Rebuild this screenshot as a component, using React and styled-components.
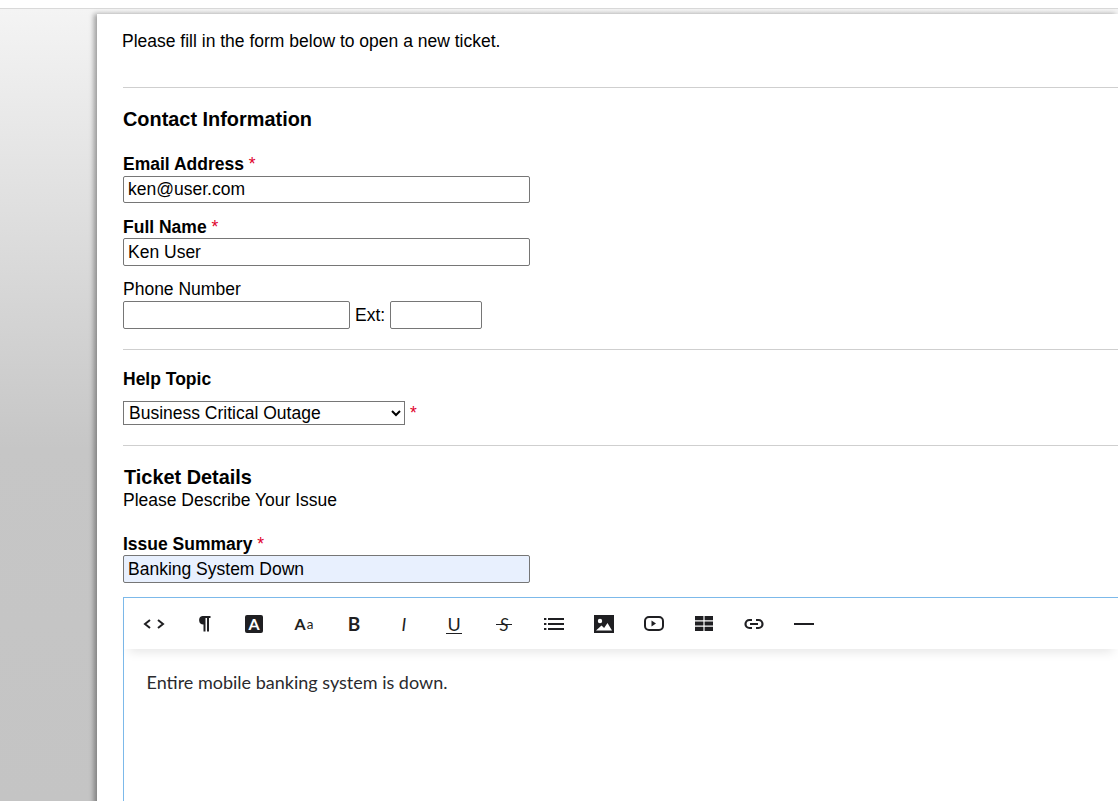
import React from "react";
import styled, { createGlobalStyle } from "styled-components";

const GlobalStyle = createGlobalStyle`
  html, body {
    margin: 0;
    padding: 0;
    height: 801px;
    overflow: hidden;
    background: #fff;
  }
`;

const Page = styled.div`
  height: 801px;
  overflow: hidden;
  padding-top: 8px;
  box-sizing: border-box;
  font-family: "Liberation Sans", Arial, sans-serif;
  font-size: 17.5px;
  color: #000;
`;

const Backdrop = styled.div`
  height: 793px;
  border-top: 1px solid #d9d9d9;
  padding: 5px 0 0 97px;
  box-sizing: border-box;
  background-image: linear-gradient(to bottom, #f4f4f4 0, #c6c6c6 440px, #c4c4c4 100%);
`;

const Main = styled.div`
  height: 800px;
  background: #fff;
  box-shadow: -3px 0 5px rgba(0, 0, 0, 0.35);
  padding: 17px 0 0 25px;
`;

const Intro = styled.p`
  margin: 0 0 36px;
  line-height: 20px;
`;

const Rule = styled.div`
  height: 1px;
  background: #cfcfcf;
  margin: ${(p) => p.$top || 0}px 0 0 1px;
`;

const Section = styled.section`
  padding-left: 1px;
`;

const Heading = styled.h2`
  margin: 20px 0 0 ${(p) => p.$left || 0}px;
  font-size: 19.9px;
  line-height: 23px;
  font-weight: bold;
`;

const Label = styled.div`
  line-height: 22px;
  font-weight: ${(p) => (p.$bold ? "bold" : "normal")};
  margin-top: ${(p) => p.$top || 0}px;
  margin-bottom: ${(p) => p.$bottom ?? 1}px;
`;

const Star = styled.span`
  color: #e0002b;
  font-weight: normal;
`;

const Field = styled.div`
  margin-top: ${(p) => p.$top}px;
`;

const Input = styled.input`
  display: block;
  box-sizing: border-box;
  width: ${(p) => p.$width}px;
  height: ${(p) => p.$height || 28}px;
  padding: 0 4px;
  margin: 0;
  border: 1px solid #767676;
  border-radius: 2px;
  background: ${(p) => p.$bg || "#fff"};
  font: inherit;
  color: #000;
  outline: none;
`;

const PhoneRow = styled.div`
  display: flex;
  align-items: center;
`;

const ExtLabel = styled.span`
  margin: 0 5px;
`;

const Select = styled.select`
  box-sizing: border-box;
  width: 282px;
  height: 24px;
  margin: 0;
  padding-left: 1px;
  border: 1px solid #767676;
  border-radius: 0;
  background: #fff;
  font: inherit;
  color: #000;
  outline: none;
`;

const TopicRow = styled.div`
  display: flex;
  align-items: center;
  gap: 5px;
  margin-top: 11px;
`;

const Editor = styled.div`
  margin-top: 14px;
  border-top: 1px solid #7cb9ea;
  border-left: 1px solid #7cb9ea;
  height: 300px;
`;

const Toolbar = styled.div`
  display: flex;
  height: 51px;
  padding-left: 5px;
  background: #fff;
  box-shadow: 0 8px 10px -5px rgba(0, 0, 0, 0.1);
`;

const ToolButton = styled.div`
  width: 50px;
  height: 51px;
  display: flex;
  align-items: center;
  justify-content: center;
  color: #1f1f22;
  font-family: "Lato", sans-serif;
  font-size: ${(p) => p.$size || 18}px;
  font-weight: ${(p) => p.$weight || 400};
  font-style: ${(p) => (p.$italic ? "italic" : "normal")};
`;

const SmallA = styled.span`
  font-size: 13.5px;
  font-weight: 400;
  margin-left: 1px;
`;

const Underlined = styled.span`
  position: relative;
  &::after {
    content: "";
    position: absolute;
    left: -1px;
    right: -1px;
    bottom: 1px;
    height: 1px;
    background: currentColor;
  }
`;

const Struck = styled.span`
  position: relative;
  font-style: italic;
  &::after {
    content: "";
    position: absolute;
    left: -3px;
    right: -3px;
    top: 11px;
    height: 1px;
    background: currentColor;
  }
`;

const Body = styled.div`
  padding: 23px 23px 23px 22.5px;
  font-size: 18px;
  line-height: 20px;
  color: #2a2a2e;
  font-family: "Lato", sans-serif;
`;

const Glyph = ({ w = 18, h = 18, children }) => (
  <svg width={w} height={h} viewBox={`0 0 ${w} ${h}`} fill="currentColor">
    {children}
  </svg>
);

const FilledLetter = styled.span`
  width: 18px;
  height: 18px;
  border-radius: 2px;
  background: #1f1f22;
  color: #fff;
  font-size: 16px;
  font-weight: 700;
  display: flex;
  align-items: center;
  justify-content: center;
`;

export default function App() {
  return (
    <Page>
      <GlobalStyle />
      <Backdrop>
        <Main>
          <Intro>Please fill in the form below to open a new ticket.</Intro>
          <Rule />
          <Section>
            <Heading>Contact Information</Heading>
            <Field $top={22}>
              <Label $bold>
                Email Address <Star>*</Star>
              </Label>
              <Input $width={407} $height={27} defaultValue="ken@user.com" />
            </Field>
            <Field $top={13}>
              <Label $bold $bottom={0}>
                Full Name <Star>*</Star>
              </Label>
              <Input $width={407} defaultValue="Ken User" />
            </Field>
            <Field $top={12}>
              <Label>Phone Number</Label>
              <PhoneRow>
                <Input $width={227} />
                <ExtLabel>Ext:</ExtLabel>
                <Input $width={92} />
              </PhoneRow>
            </Field>
          </Section>
          <Rule $top={20} />
          <Section>
            <Label $bold $top={18} $bottom={0}>Help Topic</Label>
            <TopicRow>
              <Select defaultValue="Business Critical Outage">
                <option>Business Critical Outage</option>
              </Select>
              <Star>*</Star>
            </TopicRow>
          </Section>
          <Rule $top={20} />
          <Section>
            <Heading $left={1}>Ticket Details</Heading>
            <Label $bottom={0}>Please Describe Your Issue</Label>
            <Field $top={22}>
              <Label $bold $bottom={0}>
                Issue Summary <Star>*</Star>
              </Label>
              <Input $width={407} $bg="#e8f0fe" defaultValue="Banking System Down" />
            </Field>
            <Editor>
              <Toolbar>
                <ToolButton>
                  <Glyph w={22} h={14}>
                    <path d="M7 3 2 7l5 4M15 3l5 4-5 4" fill="none" stroke="currentColor" strokeWidth="2" />
                  </Glyph>
                </ToolButton>
                <ToolButton>
                  <Glyph w={14} h={17}>
                    <path d="M5.5 1H13.5v2h-1.5v13.5H10V3H8.5v13.5H6.5V9.5A4.3 4.3 0 0 1 5.5 1z" />
                  </Glyph>
                </ToolButton>
                <ToolButton>
                  <FilledLetter>A</FilledLetter>
                </ToolButton>
                <ToolButton $size={16} $weight={700}>
                  A<SmallA>a</SmallA>
                </ToolButton>
                <ToolButton $size={19} $weight={700}>B</ToolButton>
                <ToolButton $italic>I</ToolButton>
                <ToolButton><Underlined>U</Underlined></ToolButton>
                <ToolButton><Struck>S</Struck></ToolButton>
                <ToolButton>
                  <Glyph w={20} h={14}>
                    <path d="M0 1h2.4v2H0zM0 6h2.4v2H0zM0 11h2.4v2H0zM4 1h16v2H4zM4 6h16v2H4zM4 11h16v2H4z" />
                  </Glyph>
                </ToolButton>
                <ToolButton>
                  <Glyph w={20} h={18}>
                    <path fillRule="evenodd" d="M0 0h20v18H0zM6 3.8a2.2 2.2 0 1 0 0 4.4 2.2 2.2 0 0 0 0-4.4zM2 15.5h16l-4.5-7.5-3.4 5L7.5 10.5z" />
                  </Glyph>
                </ToolButton>
                <ToolButton>
                  <Glyph w={20} h={15}>
                    <rect x="1" y="1" width="18" height="13" rx="4" fill="none" stroke="currentColor" strokeWidth="2" />
                    <path d="M7.5 4.5v6l4.5-3z" />
                  </Glyph>
                </ToolButton>
                <ToolButton>
                  <Glyph w={18} h={15}>
                    <path d="M0 0h8.4v4.2H0zM9.6 0H18v4.2H9.6zM0 5.4h8.4v4.2H0zM9.6 5.4H18v4.2H9.6zM0 10.8h8.4V15H0zM9.6 10.8H18V15H9.6z" />
                  </Glyph>
                </ToolButton>
                <ToolButton>
                  <Glyph w={20} h={12}>
                    <path d="M8 2H5.5a4 4 0 0 0 0 8H8M12 2h2.5a4 4 0 0 1 0 8H12M6 6h8" fill="none" stroke="currentColor" strokeWidth="2.2" />
                  </Glyph>
                </ToolButton>
                <ToolButton>
                  <Glyph w={20} h={4}>
                    <path d="M0 1h20v2H0z" />
                  </Glyph>
                </ToolButton>
              </Toolbar>
              <Body>Entire mobile banking system is down.</Body>
            </Editor>
          </Section>
        </Main>
      </Backdrop>
    </Page>
  );
}
